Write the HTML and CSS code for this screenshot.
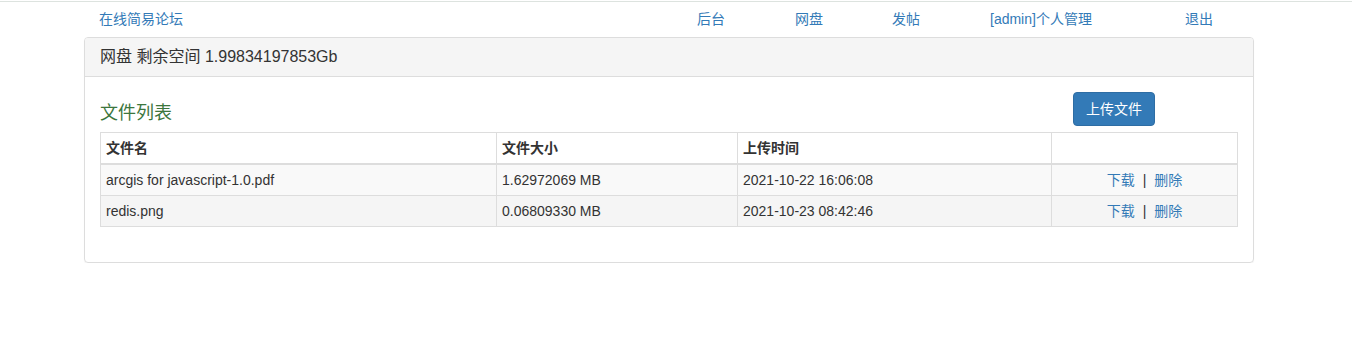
FILE: index.html
```html
<!DOCTYPE html>
<html lang="zh-CN">
<head>
<meta charset="utf-8">
<title>网盘</title>
<link rel="stylesheet" href="styles.css">
</head>
<body>
<div class="topline"></div>
<div class="container">
  <nav class="nav">
    <a href="#" class="brand">在线简易论坛</a>
    <a href="#">后台</a>
    <a href="#">网盘</a>
    <a href="#">发帖</a>
    <a href="#">[admin]个人管理</a>
    <a href="#">退出</a>
  </nav>
  <div class="panel">
    <div class="panel-heading">网盘 剩余空间 1.99834197853Gb</div>
    <div class="panel-body">
      <div class="list-head">
        <h3 class="title">文件列表</h3>
        <button class="btn">上传文件</button>
      </div>
      <table class="table">
        <colgroup>
          <col class="c1"><col class="c2"><col class="c3"><col class="c4">
        </colgroup>
        <thead>
          <tr><th>文件名</th><th>文件大小</th><th>上传时间</th><th></th></tr>
        </thead>
        <tbody>
          <tr class="odd"><td>arcgis for javascript-1.0.pdf</td><td>1.62972069 MB</td><td>2021-10-22 16:06:08</td><td class="ops"><a href="#">下载</a><span class="sep">|</span><a href="#">删除</a></td></tr>
          <tr class="even"><td>redis.png</td><td>0.06809330 MB</td><td>2021-10-23 08:42:46</td><td class="ops"><a href="#">下载</a><span class="sep">|</span><a href="#">删除</a></td></tr>
        </tbody>
      </table>
    </div>
  </div>
</div>
</body>
</html>
```
FILE: styles.css
```css
html, body {
  margin: 0;
  padding: 0;
  background: #fff;
}
body {
  font-family: "Liberation Sans", Arial, "Noto Sans CJK SC", sans-serif;
  font-size: 14px;
  line-height: 20px;
  color: #333;
  padding-right: 14px;
}
a {
  color: #337ab7;
  text-decoration: none;
}
.topline {
  margin-top: 1px;
  height: 1px;
  background: #dde3df;
  margin-right: -14px;
}
.container {
  width: 1170px;
  margin: 0 auto;
}
.nav {
  display: grid;
  grid-template-columns: 598px 98px 97px 98px 195px auto;
  padding: 7px 15px 8px 15px;
  height: 20px;
}
.panel {
  border: 1px solid #ddd;
  border-radius: 4px;
  box-shadow: 0 1px 1px rgba(0,0,0,0.05);
}
.panel-heading {
  background: #f5f5f5;
  border-bottom: 1px solid #ddd;
  border-radius: 3px 3px 0 0;
  padding: 10px 15px;
  font-size: 16px;
  line-height: 18px;
  height: 18px;
  color: #333;
}
.panel-body {
  padding: 15px;
}
.list-head {
  display: flex;
  align-items: flex-start;
  height: 40px;
}
.title {
  flex: 1;
  margin: 0;
  padding-top: 10px;
  font-size: 18px;
  line-height: 22px;
  font-weight: normal;
  color: #3c763d;
}
.btn {
  margin-right: 83px;
  height: 34px;
  padding: 6px 12px;
  font-family: inherit;
  font-size: 14px;
  line-height: 20px;
  color: #fff;
  background: #337ab7;
  border: 1px solid #2e6da4;
  border-radius: 4px;
}
.table {
  width: 100%;
  border-collapse: collapse;
  margin-bottom: 20px;
  border: 1px solid #ddd;
}
.c1 { width: 396px; }
.c2 { width: 241px; }
.c3 { width: 314px; }
.table th, .table td {
  border: 1px solid #ddd;
  padding: 5px 5px;
  line-height: 20px;
  text-align: left;
  vertical-align: top;
}
.table th {
  font-weight: bold;
  border-bottom: 2px solid #ddd;
}
.table tr.odd td { background: #f9f9f9; }
.table tr.even td { background: #f5f5f5; }
.table td.ops {
  text-align: center;
}
.sep {
  margin: 0 8px;
  color: #333;
}
```
